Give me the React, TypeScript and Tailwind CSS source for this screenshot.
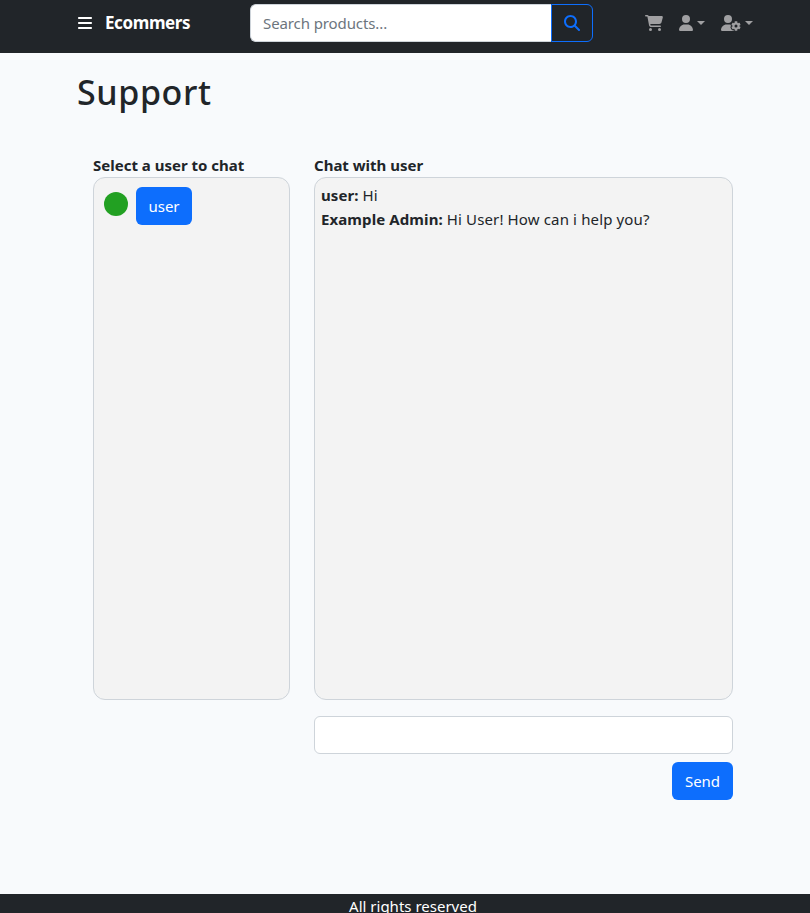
import { FaBars, FaCartShopping, FaMagnifyingGlass, FaUser, FaUserGear } from "react-icons/fa6";

function Caret() {
  return <span className="h-0 w-0 border-x-[4.5px] border-t-[4.5px] border-x-transparent border-t-[#a0a0a2]" />;
}

function Header() {
  return (
    <header className="flex h-[53px] items-start bg-[#212529] pl-[78px] pt-1">
      <div className="flex h-[38px] w-[172px] items-center text-white">
        <FaBars className="h-4 w-[14px]" />
        <span className="ml-[13px] text-[17px] leading-6 font-bold tracking-[-0.4px]">Ecommers</span>
      </div>
      <div className="flex h-[38px] w-[343px]">
        <input
          placeholder="Search products..."
          className="w-[301px] rounded-l-[6px] border border-r-0 border-[#ced4da] bg-white px-3 text-[15px] tracking-[-0.1px] text-[#212529] placeholder:text-[#6c757d]"
        />
        <button className="flex w-[42px] items-center justify-center rounded-r-[6px] border border-[#0d6efd] text-[#0d6efd]">
          <FaMagnifyingGlass className="h-4 w-4" />
        </button>
      </div>
      <nav className="ml-[52px] flex h-[38px] items-center text-[#a0a0a2]">
        <FaCartShopping className="h-4 w-[18px]" />
        <div className="ml-[16px] flex items-center gap-[4px]">
          <FaUser className="h-4 w-[14px]" />
          <Caret />
        </div>
        <div className="ml-[16px] flex items-center gap-[4px]">
          <FaUserGear className="h-4 w-5" />
          <Caret />
        </div>
      </nav>
    </header>
  );
}

function Users() {
  return (
    <section className="w-[197px]">
      <h2 className="h-6 text-[15px] leading-6 font-bold whitespace-nowrap">Select a user to chat</h2>
      <div className="flex h-[523px] items-start gap-2 rounded-[12px] border border-[#ced4da] bg-[#f3f3f3] pl-[10px] pt-[9px]">
        <span className="mt-[5px] h-6 w-6 rounded-full bg-[#22a022]" />
        <button className="h-[38px] w-14 rounded-[6px] bg-[#0d6efd] text-[15px] text-white">user</button>
      </div>
    </section>
  );
}

function Chat() {
  return (
    <section className="w-[419px]">
      <h2 className="h-6 text-[15px] leading-6 font-bold">Chat with user</h2>
      <div className="h-[523px] rounded-[12px] border border-[#ced4da] bg-[#f3f3f3] px-[6px] py-[5px] text-[15px] leading-6">
        <p>
          <b className="font-bold tracking-[0.1px]">user:</b> <span>Hi</span>
        </p>
        <p>
          <b className="font-bold tracking-[0.1px]">Example Admin:</b>{" "}
          <span className="tracking-[0.14px]">Hi User! How can i help you?</span>
        </p>
      </div>
      <input className="mt-4 block h-[38px] w-full rounded-[6px] border border-[#ced4da] bg-white px-3 text-[15px]" />
      <div className="mt-2 flex justify-end">
        <button className="h-[38px] w-[61px] rounded-[6px] bg-[#0d6efd] text-[15px] text-white">Send</button>
      </div>
    </section>
  );
}

export default function App() {
  return (
    <div className="flex h-[913px] flex-col overflow-hidden bg-[#f8fafc] font-['Noto_Sans','Open_Sans',sans-serif] text-[#212529]">
      <Header />
      <main className="grow px-[77px] pt-4">
        <h1 className="h-[84px] text-[34px] leading-[46px] font-medium tracking-[0.6px]">Support</h1>
        <div className="flex gap-6 pl-4">
          <Users />
          <Chat />
        </div>
      </main>
      <footer className="h-[19px] shrink-0 bg-[#212529] pl-4 text-center text-[15px] leading-6 text-white">All rights reserved</footer>
    </div>
  );
}
